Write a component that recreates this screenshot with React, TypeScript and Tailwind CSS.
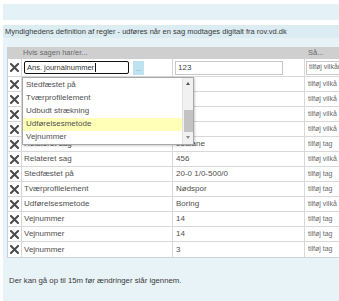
import React from "react";

const XIcon = () => (
  <svg width="9" height="9" viewBox="0 0 9 9" className="block">
    <path d="M1 1 L8 8 M8 1 L1 8" stroke="#4a4a4a" strokeWidth="2" strokeLinecap="square" />
  </svg>
);

type Row = { label: string; value: string; action: string };

const rows: Row[] = [
  { label: "", value: "", action: "tilføj vilkå" },
  { label: "", value: "", action: "tilføj vilkå" },
  { label: "", value: "", action: "tilføj vilkå" },
  { label: "", value: "", action: "tilføj vilkå" },
  { label: "Relateret sag", value: "Letbane", action: "tilføj tag" },
  { label: "Relateret sag", value: "456", action: "tilføj vilkå" },
  { label: "Stedfæstet på", value: "20-0 1/0-500/0", action: "tilføj tag" },
  { label: "Tværprofilelement", value: "Nødspor", action: "tilføj tag" },
  { label: "Udførelsesmetode", value: "Boring", action: "tilføj vilkå" },
  { label: "Vejnummer", value: "14", action: "tilføj tag" },
  { label: "Vejnummer", value: "14", action: "tilføj tag" },
  { label: "Vejnummer", value: "3", action: "tilføj tag" },
];

const options = ["Stedfæstet på", "Tværprofilelement", "Udbudt strækning", "Udførelsesmetode", "Vejnummer"];

export default function App() {
  return (
    <div className="w-[339px] h-[301px] bg-white overflow-hidden font-['Liberation_Sans',Arial,sans-serif] pt-[4px] pl-[3px] flex flex-col">
      <div className="h-[16px] bg-[#e4f1f6] shrink-0" />
      <div className="h-[5px] shrink-0" />
      <div className="h-[13px] bg-[#dcecf3] shrink-0 flex items-center pl-[2px] text-[7.5px] text-[#3a3a3a] whitespace-nowrap">
        Myndighedens definition af regler - udføres når en sag modtages digitalt fra rov.vd.dk
      </div>
      <div className="flex-1 bg-[#e8f3f7] pt-[9px] pl-[4px] flex flex-col relative">
        <div className="w-[420px] bg-white border-l border-b border-[#c9d3d7] text-[8px] text-[#505050]">
          {/* header */}
          <div className="h-[12px] bg-[#cfcfcf] flex items-center text-[#6a6a6a] text-[7.5px]">
            <div className="w-[14px]" />
            <div className="w-[151px] pl-[1px]">Hvis sagen har/er...</div>
            <div className="w-[132px]" />
            <div className="pl-[3px]">Så...</div>
          </div>
          {/* input row */}
          <div className="h-[18px] flex items-center border-b border-[#d8d8d8]">
            <div className="w-[14px] h-full flex items-center justify-center border-r border-[#d8d8d8]">
              <XIcon />
            </div>
            <div className="w-[151px] h-full flex items-center pl-[2px] gap-[4px] border-r border-[#d8d8d8]">
              <div className="w-[105px] h-[13px] border border-[#111] rounded-[2px] flex items-center pl-[2px] text-[#333] text-[7.5px]">
                Ans. journalnummer<span className="inline-block w-[1px] h-[9px] bg-[#111] ml-[0.5px]" />
              </div>
              <div className="w-[11px] h-[14px] bg-[#bde2f0] flex items-end justify-center pb-[3px] text-[6px] leading-none text-[#777]">...</div>
            </div>
            <div className="w-[132px] h-full flex items-center pl-[2px] border-r border-[#d8d8d8]">
              <div className="w-[108px] h-[14px] border border-[#c8c8c8] flex items-center pl-[2px] text-[#444]">123</div>
            </div>
            <div className="h-full flex items-center pl-[1px]">
              <div className="w-[60px] h-[14px] border border-[#c8c8c8] flex items-center pl-[2px] text-[7px] text-[#666]">tilføj vilkår</div>
            </div>
          </div>
          {rows.map((r, i) => (
            <div key={i} className="h-[15px] flex items-center border-b border-[#d8d8d8] last:border-b-0">
              <div className="w-[14px] h-full flex items-center justify-center border-r border-[#d8d8d8]">
                <XIcon />
              </div>
              <div className="w-[151px] h-full flex items-center pl-[2px] border-r border-[#d8d8d8]">{r.label}</div>
              <div className="w-[132px] h-full flex items-center pl-[3px] border-r border-[#d8d8d8]">{r.value}</div>
              <div className="h-full flex items-center pl-[3px] text-[7px] text-[#6a6a6a] whitespace-nowrap">{r.action}</div>
            </div>
          ))}
        </div>
        <div className="pl-[2px] pt-[17px] text-[7.8px] text-[#3a3a3a] whitespace-nowrap">
          Der kan gå op til 15m før ændringer slår igennem.
        </div>

        {/* dropdown overlay */}
        <div className="absolute left-[19px] top-[39px] w-[172px] h-[68px] bg-white border border-[#a8a8a8] shadow-[1px_1px_2px_rgba(0,0,0,0.2)] flex overflow-hidden">
          <div className="flex-1 flex flex-col text-[8px] text-[#505050]">
            {options.map((o) => (
              <div
                key={o}
                className={`h-[13.2px] shrink-0 flex items-center pl-[3px] ${o === "Udførelsesmetode" ? "bg-[#ffffb8]" : ""}`}
              >
                {o}
              </div>
            ))}
          </div>
          <div className="w-[11px] bg-[#f1f1f1] border-l border-[#e2e2e2] flex flex-col items-center">
            <div className="h-[11px] flex items-center justify-center">
              <div className="w-0 h-0 border-l-[2.5px] border-r-[2.5px] border-b-[3px] border-l-transparent border-r-transparent border-b-[#555]" />
            </div>
            <div className="h-[22px] mt-[21px] w-[9px] bg-[#c3c3c3]" />
            <div className="h-[11px] flex items-center justify-center">
              <div className="w-0 h-0 border-l-[2.5px] border-r-[2.5px] border-t-[3px] border-l-transparent border-r-transparent border-t-[#888]" />
            </div>
          </div>
        </div>
      </div>
    </div>
  );
}
